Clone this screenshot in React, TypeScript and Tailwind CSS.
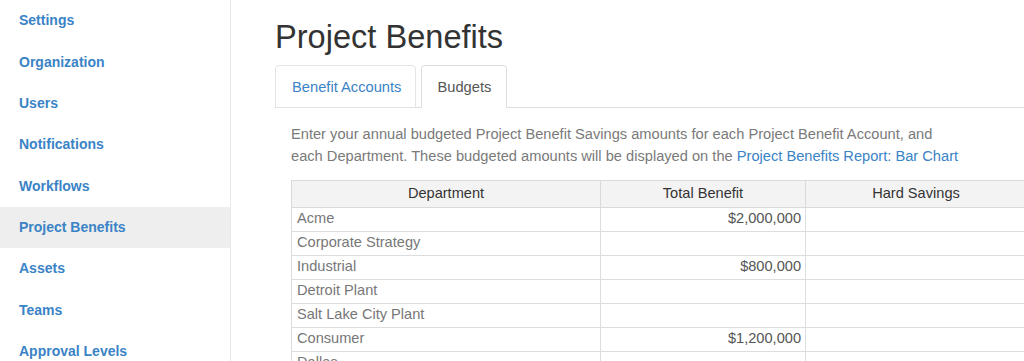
const navItems = [
  'Settings',
  'Organization',
  'Users',
  'Notifications',
  'Workflows',
  'Project Benefits',
  'Assets',
  'Teams',
  'Approval Levels',
]

const rows: { name: string; total: string }[] = [
  { name: 'Acme', total: '$2,000,000' },
  { name: 'Corporate Strategy', total: '' },
  { name: 'Industrial', total: '$800,000' },
  { name: 'Detroit Plant', total: '' },
  { name: 'Salt Lake City Plant', total: '' },
  { name: 'Consumer', total: '$1,200,000' },
  { name: 'Dallas', total: '' },
]

export default function App() {
  return (
    <div
      className="flex h-[361px] w-[1024px] overflow-hidden bg-white"
      style={{ fontFamily: '"Liberation Sans", Arial, sans-serif' }}
    >
      {/* Sidebar */}
      <div className="w-[231px] shrink-0 border-r border-[#e9e9e9]">
        {navItems.map(item => (
          <div
            key={item}
            className={`flex h-[41.375px] items-center pl-[19px] text-[14px] font-bold text-[#3a83c6] ${
              item === 'Project Benefits' ? 'bg-[#eeeeee]' : ''
            }`}
          >
            {item}
          </div>
        ))}
      </div>

      {/* Main */}
      <div className="min-w-0 flex-1 pl-[44px]">
        <h1 className="mt-[19px] text-[32.6px] leading-[1.1] text-[#333]">Project Benefits</h1>

        {/* Tabs */}
        <div className="mt-[10px] flex h-[43px] items-end border-b border-[#dddddd]">
          <div className="mr-[5px] -mb-px flex h-[43px] items-center rounded-t-[4px] border border-[#e3e3e3] pl-[16px] pr-[14px] pt-[2px] text-[14.7px] text-[#3a83c6]">
            Benefit Accounts
          </div>
          <div className="-mb-px flex h-[43px] items-center rounded-t-[4px] border border-[#dddddd] border-b-white bg-white px-[15px] pt-[2px] text-[14.7px] text-[#555]">
            Budgets
          </div>
        </div>

        <div className="pl-[16px]">
          <p className="mt-[15px] text-[14.65px] leading-[22px] text-[#7a7a7a]">
            Enter your annual budgeted Project Benefit Savings amounts for each Project Benefit Account, and
            <br />
            each Department. These budgeted amounts will be displayed on the{' '}
            <span className="text-[#3a83c6]">Project Benefits Report: Bar Chart</span>
          </p>

          <table className="mt-[13px] w-[735px] table-fixed border-collapse text-[14.6px]">
            <colgroup>
              <col className="w-[309px]" />
              <col className="w-[205px]" />
              <col className="w-[221px]" />
            </colgroup>
            <thead>
              <tr className="h-[27px] bg-[#f3f3f3]">
                <th className="border border-[#d9d9d9] text-center font-normal text-[#333]">Department</th>
                <th className="border border-[#d9d9d9] text-center font-normal text-[#333]">Total Benefit</th>
                <th className="border border-[#d9d9d9] text-center font-normal text-[#333]">Hard Savings</th>
              </tr>
            </thead>
            <tbody>
              {rows.map(r => (
                <tr key={r.name} className="h-[24px]">
                  <td className="border border-[#dddddd] px-[5px] text-[#777]">{r.name}</td>
                  <td className="border border-[#dddddd] px-[4px] text-right text-[#555]">{r.total}</td>
                  <td className="border border-[#dddddd]"></td>
                </tr>
              ))}
            </tbody>
          </table>
        </div>
      </div>
    </div>
  )
}
